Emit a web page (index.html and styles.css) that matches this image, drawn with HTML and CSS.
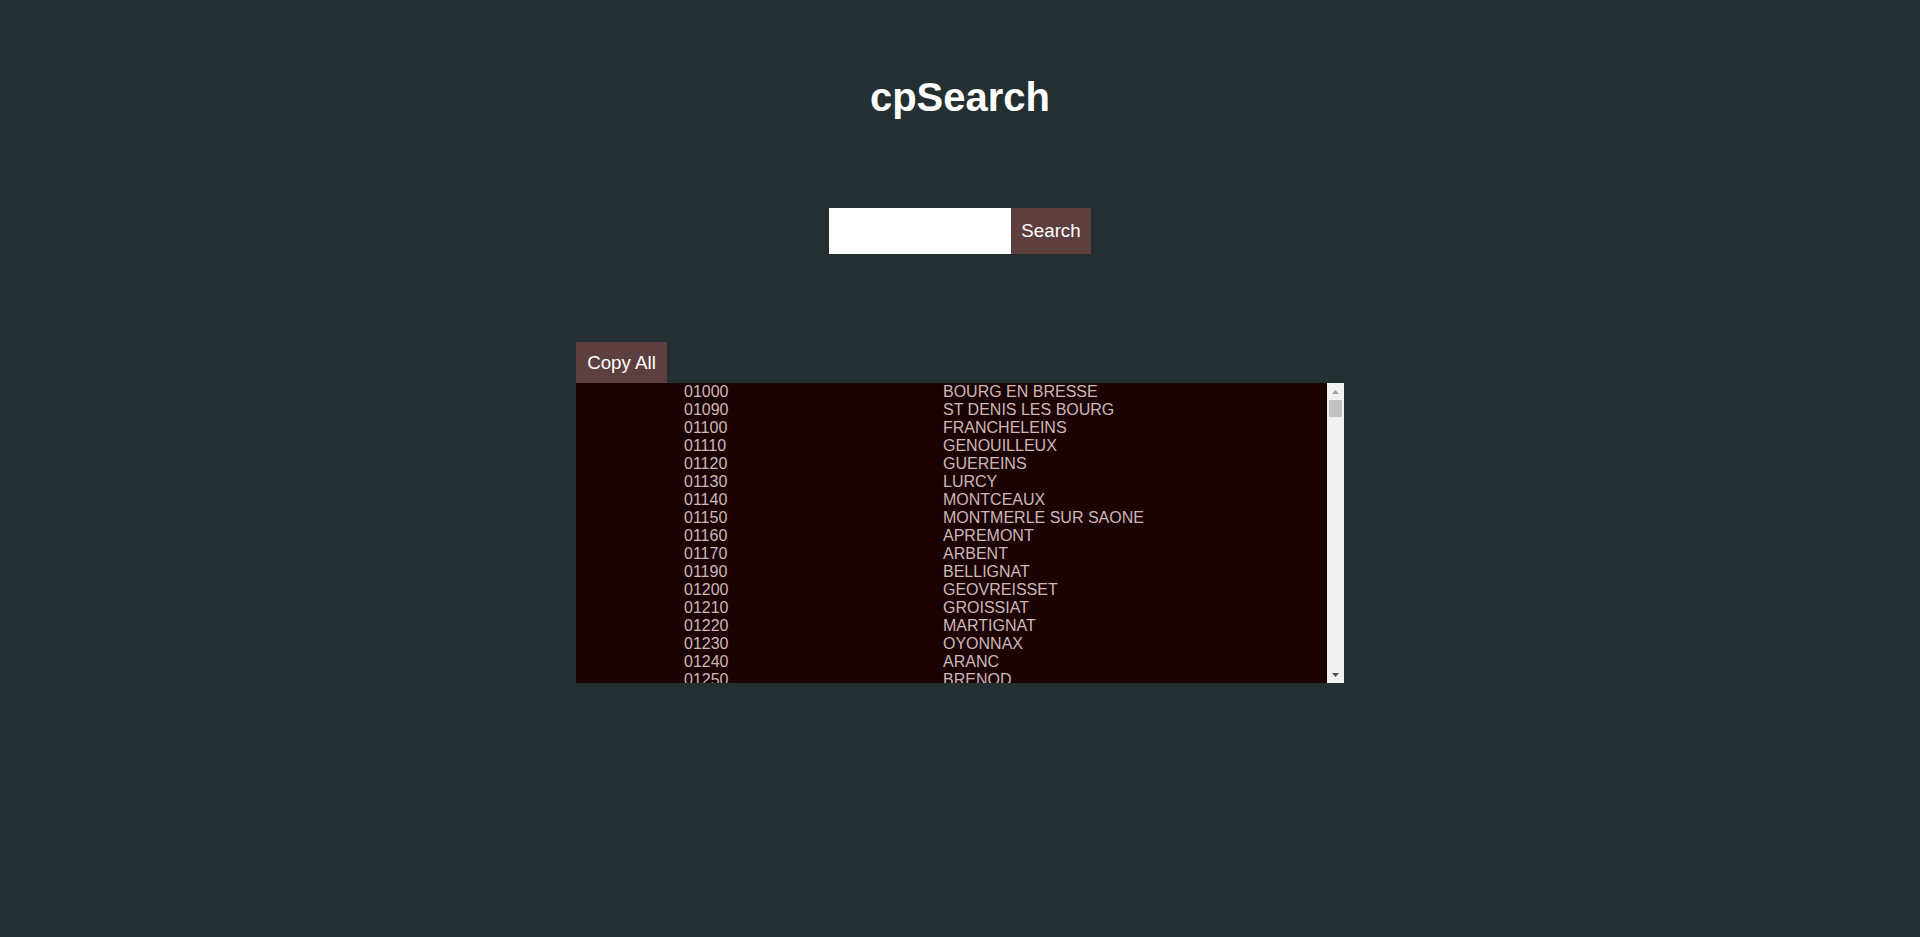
FILE: index.html
```html
<!DOCTYPE html>
<html lang="fr">
<head>
<meta charset="utf-8">
<title>cpSearch</title>
<link rel="stylesheet" href="styles.css">
</head>
<body>
<main class="page">
  <h1 class="title">cpSearch</h1>
  <form class="search" onsubmit="return false;">
    <input class="search-input" type="text" aria-label="Code postal ou ville">
    <button class="search-btn" type="submit">Search</button>
  </form>
  <section class="results">
    <button class="copy-btn" type="button">Copy All</button>
    <div class="list-box">
      <div class="list">
        <div class="row"><span>01000</span><span>BOURG EN BRESSE</span></div>
        <div class="row"><span>01090</span><span>ST DENIS LES BOURG</span></div>
        <div class="row"><span>01100</span><span>FRANCHELEINS</span></div>
        <div class="row"><span>01110</span><span>GENOUILLEUX</span></div>
        <div class="row"><span>01120</span><span>GUEREINS</span></div>
        <div class="row"><span>01130</span><span>LURCY</span></div>
        <div class="row"><span>01140</span><span>MONTCEAUX</span></div>
        <div class="row"><span>01150</span><span>MONTMERLE SUR SAONE</span></div>
        <div class="row"><span>01160</span><span>APREMONT</span></div>
        <div class="row"><span>01170</span><span>ARBENT</span></div>
        <div class="row"><span>01190</span><span>BELLIGNAT</span></div>
        <div class="row"><span>01200</span><span>GEOVREISSET</span></div>
        <div class="row"><span>01210</span><span>GROISSIAT</span></div>
        <div class="row"><span>01220</span><span>MARTIGNAT</span></div>
        <div class="row"><span>01230</span><span>OYONNAX</span></div>
        <div class="row"><span>01240</span><span>ARANC</span></div>
        <div class="row"><span>01250</span><span>BRENOD</span></div>
      </div>
      <div class="scrollbar" aria-hidden="true">
        <div class="sb-btn">
          <svg width="7" height="4" viewBox="0 0 7 4"><polygon points="3.5,0 7,4 0,4" fill="#a3a3a3"/></svg>
        </div>
        <div class="sb-thumb"></div>
        <div class="sb-track"></div>
        <div class="sb-btn">
          <svg width="7" height="4" viewBox="0 0 7 4"><polygon points="0,0 7,0 3.5,4" fill="#505050"/></svg>
        </div>
      </div>
    </div>
  </section>
</main>
</body>
</html>
```

FILE: styles.css
```css
html, body {
  margin: 0;
  padding: 0;
}

body {
  background: #232f30;
  font-family: "Liberation Sans", Arial, sans-serif;
  color: #ffffff;
  min-height: 937px;
}

.page {
  display: flex;
  flex-direction: column;
  align-items: center;
}

.title {
  margin: 74px 0 0;
  font-size: 40px;
  line-height: 46px;
  font-weight: bold;
  color: #ffffff;
}

.search {
  display: flex;
  margin-top: 88px;
  height: 46px;
}

.search-input {
  width: 182px;
  height: 46px;
  box-sizing: border-box;
  border: none;
  outline: none;
  background: #ffffff;
  padding: 0 8px;
  font-family: "Liberation Sans", Arial, sans-serif;
  font-size: 16px;
}

.search-btn {
  width: 80px;
  height: 46px;
  border: none;
  margin: 0;
  padding: 0;
  background: #5d3f3f;
  color: #ffffff;
  font-family: "Liberation Sans", Arial, sans-serif;
  font-size: 18.72px;
  cursor: pointer;
}

.results {
  margin-top: 88px;
  width: 768px;
  display: flex;
  flex-direction: column;
  align-items: flex-start;
}

.copy-btn {
  height: 41px;
  width: 91px;
  border: none;
  margin: 0;
  padding: 0;
  background: #5d3f3f;
  color: #ffffff;
  font-family: "Liberation Sans", Arial, sans-serif;
  font-size: 18.72px;
  cursor: pointer;
}

.list-box {
  display: flex;
  width: 768px;
  height: 300px;
  background: #1b0303;
}

.list {
  flex: 1;
  overflow: hidden;
  padding-left: 108px;
}

.row {
  display: grid;
  grid-template-columns: 259px 1fr;
  font-size: 16px;
  line-height: 18px;
  color: #cdb7b7;
  white-space: nowrap;
}

.scrollbar {
  width: 17px;
  flex: none;
  background: #f1f1f1;
  display: flex;
  flex-direction: column;
}

.sb-btn {
  height: 17px;
  display: flex;
  align-items: center;
  justify-content: center;
}

.sb-btn svg {
  display: block;
}

.sb-thumb {
  height: 17px;
  margin: 0 2px;
  background: #c1c1c1;
}

.sb-track {
  flex: 1;
}
```
